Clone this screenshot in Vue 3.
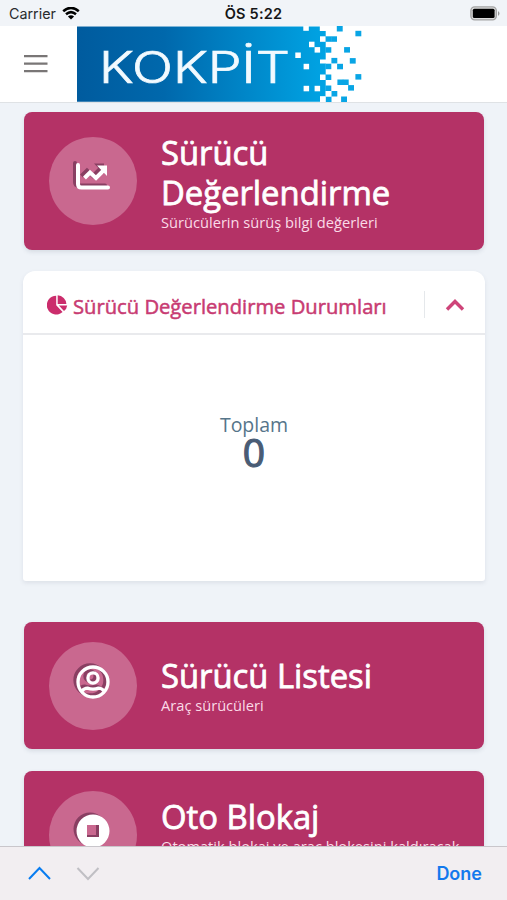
<script setup>
const cards = [
  { title: 'Sürücü Değerlendirme', text: 'Sürücülerin sürüş bilgi değerleri', icon: 'chart' },
  { title: 'Sürücü Listesi', text: 'Araç sürücüleri', icon: 'user' },
  { title: 'Oto Blokaj', text: 'Otomatik blokaj ve araç blokesini kaldıracak', icon: 'stop' },
]
// Logo mosaic: centre points of the coloured and the cut-out tiles
const blue = [[262.7, 2.7], [281.3, 7.5], [251.3, 13], [257, 13], [251.3, 23.9], [270, 23.8], [257.3, 34.6], [275.7, 34.8], [251.3, 40.4], [263, 40.5], [281.3, 50.8], [251.3, 51.2], [263.3, 56.2], [268.7, 56.2], [274, 61.8], [251.3, 62.2], [257.3, 67.7], [251.5, 73.2], [267, 73.2]]
const white = [[229, 2], [245.7, 13], [234.7, 18.4], [240.3, 23.8], [221, 29.2], [229.3, 40.5], [245.7, 51.2], [229.3, 62.5], [240.3, 62.5], [251.4, 67.7], [245.7, 73.4]]
</script>

<template>
  <div class="screen">
    <div class="status">
      <div class="carrier">Carrier
        <svg width="18" height="13" viewBox="0 0 18 13"><path d="M1.2 4.3Q9-2.6 16.8 4.3M4 7.3Q9 3 14 7.3" fill="none" stroke="#000" stroke-width="2.5"/><path d="M5.9 9.4Q9 6.9 12.1 9.4L9 12.6Z"/></svg>
      </div>
      <div class="time">ÖS 5:22</div>
      <svg class="battery" width="31" height="15" viewBox="0 0 31 15"><rect x=".9" y=".9" width="25.4" height="13" rx="3.8" fill="#ddd" stroke="#a3a3a3" stroke-width="1.4"/><rect x="2.8" y="2.8" width="21.8" height="9.2" rx="1.5"/><path d="M28 5q3 2.5 0 5z" fill="#999"/></svg>
    </div>
    <header>
      <svg class="burger" width="24" height="20" viewBox="0 0 24 20"><path d="M0 2.2H23.5M0 9.7H23.5M0 17.2H23.5" stroke="#797676" stroke-width="2.3"/></svg>
      <svg class="logo" width="288" height="76" viewBox="0 0 288 76">
        <defs><linearGradient id="sea"><stop offset="0" stop-color="#005b9e"/><stop offset=".35" stop-color="#0068ac"/><stop offset="1" stop-color="#00a4e4"/></linearGradient></defs>
        <path d="M0 .5H242.8V5H248.7V33.5H243V37.5H248.7V70.3H243V75.8H0Z" fill="url(#sea)"/>
        <rect v-for="(p, i) in blue" :key="'b' + i" :x="p[0] - 2.9" :y="p[1] - 2.7" width="5.9" height="5.5" fill="#08a5e5"/>
        <rect v-for="(p, i) in white" :key="'w' + i" :x="p[0] - 2.7" :y="p[1] - 2.7" width="5.5" height="5.5" fill="#fff"/>
        <text x="22" y="57.2" textLength="191" lengthAdjust="spacingAndGlyphs">KOKPİT</text>
      </svg>
    </header>
    <main>
      <template v-for="(card, i) in cards" :key="card.title">
        <section class="card" :class="card.icon">
          <div class="circle">
            <svg v-if="card.icon === 'chart'" class="icon" width="36" height="36" viewBox="0 0 36 36"><path d="M3 6V25Q3 28.5 6.5 28.5H33" fill="none" stroke="currentColor" stroke-width="4" stroke-linecap="round"/><path d="M9.5 19L15 13.5L21 19L29 11" fill="none" stroke="currentColor" stroke-width="4"/><path d="M22 6.5H32V17Z" fill="currentColor"/></svg>
            <svg v-else-if="card.icon === 'user'" class="icon" width="36" height="36" viewBox="0 0 36 36"><g fill="none" stroke="currentColor" stroke-width="3.3"><circle cx="18" cy="18" r="15"/><circle cx="18" cy="14" r="5.1"/><path d="M7 27Q9.2 24.1 12.5 24.1Q18 26 23.5 24.1Q26.8 24.1 29 27"/></g></svg>
            <svg v-else class="icon" width="36" height="36" viewBox="0 0 36 36"><path fill-rule="evenodd" d="M18 1.5a16.5 16.5 0 1 0 0 33a16.5 16.5 0 1 0 0-33ZM12 12H24V24H12Z" fill="currentColor"/></svg>
          </div>
          <div class="copy"><h2>{{ card.title }}</h2><p>{{ card.text }}</p></div>
        </section>
        <section v-if="i === 0" class="panel">
          <div class="head">
            <svg width="21" height="20" viewBox="0 0 21 20" fill="#cb2d6c"><path d="M9.2.7V10.2L15.6 17A9.4 9.4 0 1 1 9.2.7Z"/><path d="M10.7.3A9.2 9.2 0 0 1 19.4 9H10.7Z"/><path d="M11.9 10.6H20.2Q19.8 14 17 16Z"/></svg>
            <h3>Sürücü Değerlendirme Durumları</h3>
            <div class="toggle"><svg width="20" height="14" viewBox="0 0 20 14"><path d="M2 11.5L10 3.5L18 11.5" fill="none" stroke="#ce4479" stroke-width="3.4"/></svg></div>
          </div>
          <div class="total"><span>Toplam</span><strong>0</strong></div>
        </section>
      </template>
    </main>
    <footer>
      <svg width="72" height="16" viewBox="0 0 72 16" fill="none" stroke-width="2"><path d="M1 13L11.5 2L22 13" stroke="#087cf0"/><path d="M49.5 2L60 13L70.5 2" stroke="#c0bfc4"/></svg>
      <span>Done</span>
    </footer>
  </div>
</template>

<style>
body { margin: 0; background: #eff3f8; }
</style>
<style scoped>
* { box-sizing: border-box; }
svg { display: block; flex: none; }
h2, h3, p { margin: 0; }
.screen { width: 507px; height: 900px; overflow: hidden; display: flex; flex-direction: column; font-family: "Open Sans", sans-serif; background: #eff3f8; }
.status { height: 26px; flex: none; display: grid; grid-template-columns: 1fr auto 1fr; align-items: center; padding: 1px 6px 0 9px; font: 14.3px Inter, sans-serif; color: #292b2d; background: #f1f4f8; }
.carrier { display: flex; gap: 6px; align-items: center; }
.time { font-weight: 600; font-size: 14.5px; color: #151617; margin-right: 3px; letter-spacing: .2px; }
.battery { justify-self: end; }
header { height: 77px; flex: none; display: flex; align-items: flex-start; padding-left: 24px; background: #fff; border-bottom: 1px solid #dfe2e5; }
.burger { margin-top: 28px; }
.logo { margin-left: 29px; }
.logo text { font: 300 43px Inter, sans-serif; fill: #f2faff; stroke: #f2faff; stroke-width: .7px; }
main { flex: 1; min-height: 0; overflow: hidden; padding: 9px 23px 0 24px; }
.card { height: 127px; width: 460px; display: flex; align-items: center; padding-left: 25px; border-radius: 8px; background: #b43266; color: #fff; box-shadow: 0 2px 4px #57647b29; margin-bottom: 22px; }
.card.chart { height: 138px; margin-bottom: 21px; }
.circle { width: 88px; height: 88px; flex: none; border-radius: 50%; display: flex; justify-content: center; padding-top: 22px; background: #c9688f; }
.icon { filter: drop-shadow(-3px -2px 0 #713052bb); }
.copy { padding-left: 24px; white-space: nowrap; }
.chart .copy { width: 290px; padding-top: 3px; }
.stop .copy { padding-bottom: 17px; }
.chart h2 { white-space: normal; }
h2 { font-size: 32.8px; line-height: 40px; font-weight: 400; -webkit-text-stroke: .8px currentColor; }
p { font-size: 14.65px; line-height: 19px; color: #fbdbe8; }
.panel { width: 462px; height: 310px; margin: 0 0 41px -1px; border-radius: 12px 12px 3px 3px; background: #fff; box-shadow: 0 2px 4px #57647b1f; }
.head { height: 64px; display: flex; align-items: center; padding: 5px 0 0 24px; border-bottom: 2px solid #e9eaed; }
h3 { font-size: 20.2px; line-height: 28px; font-weight: 400; -webkit-text-stroke: .5px currentColor; color: #c83b72; margin: 2px 0 0 5px; white-space: nowrap; }
.toggle { margin-left: auto; width: 61px; height: 27px; padding-left: 20px; display: flex; align-items: center; border-left: 1px solid #e5e8eb; }
.total { display: flex; flex-direction: column; align-items: center; padding-top: 77px; }
.total span { font-size: 19.5px; line-height: 25px; color: #56758a; }
.total strong { font-size: 39px; line-height: 29px; font-weight: 400; -webkit-text-stroke: 1.2px currentColor; color: #495c75; }
footer { height: 54px; flex: none; display: flex; align-items: center; justify-content: space-between; padding: 0 25px 0 28px; background: #f2eef1; border-top: 1px solid #c9c6cb; }
footer span { font: 600 18px Inter, sans-serif; color: #1479ed; }
</style>
